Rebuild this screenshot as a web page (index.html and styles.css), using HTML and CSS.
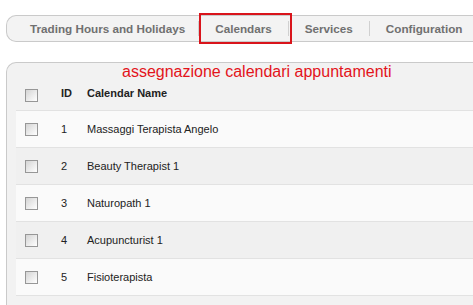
FILE: index.html
```html
<!DOCTYPE html>
<html>
<head>
<meta charset="utf-8">
<link rel="stylesheet" href="styles.css">
</head>
<body>
<div class="page">
  <nav class="tabs">
    <span class="tab tab-first">Trading Hours and Holidays</span>
    <span class="sep"></span>
    <span class="tab">Calendars</span>
    <span class="sep"></span>
    <span class="tab">Services</span>
    <span class="sep"></span>
    <span class="tab">Configuration</span>
    <span class="highlight"></span>
  </nav>
  <section class="panel">
    <div class="note">assegnazione calendari appuntamenti</div>
    <div class="table">
      <div class="row head">
        <span class="c-check"><span class="cb"></span></span>
        <span class="c-id">ID</span>
        <span class="c-name">Calendar Name</span>
      </div>
      <div class="row light">
        <span class="c-check"><span class="cb"></span></span>
        <span class="c-id">1</span>
        <span class="c-name">Massaggi Terapista Angelo</span>
      </div>
      <div class="row dark">
        <span class="c-check"><span class="cb"></span></span>
        <span class="c-id">2</span>
        <span class="c-name">Beauty Therapist 1</span>
      </div>
      <div class="row light">
        <span class="c-check"><span class="cb"></span></span>
        <span class="c-id">3</span>
        <span class="c-name">Naturopath 1</span>
      </div>
      <div class="row dark">
        <span class="c-check"><span class="cb"></span></span>
        <span class="c-id">4</span>
        <span class="c-name">Acupuncturist 1</span>
      </div>
      <div class="row light">
        <span class="c-check"><span class="cb"></span></span>
        <span class="c-id">5</span>
        <span class="c-name">Fisioterapista</span>
      </div>
    </div>
  </section>
</div>
</body>
</html>
```

FILE: styles.css
```css
html, body {
  margin: 0;
  padding: 0;
  background: #ffffff;
  overflow: hidden;
}
body {
  font-family: "Liberation Sans", Arial, sans-serif;
  width: 473px;
  height: 305px;
}
.page {
  width: 467px;
  height: 290px;
  padding: 15px 0 0 6px;
  overflow: hidden;
}
.tabs {
  position: relative;
  display: flex;
  align-items: center;
  height: 25px;
  border: 1px solid #cacaca;
  border-right: none;
  border-radius: 10px 0 0 10px;
  background: #f3f3f3;
}
.tab {
  font-size: 11.7px;
  font-weight: bold;
  color: #707070;
  padding: 0 16px;
  white-space: nowrap;
}
.tab-first {
  padding-left: 23px;
  padding-right: 13px;
}
.sep {
  width: 1px;
  height: 15px;
  background: #d0d0d0;
  flex-shrink: 0;
}
.highlight {
  position: absolute;
  left: 192px;
  top: -3px;
  width: 89px;
  height: 27px;
  border: 2px solid #d9141b;
}
.panel {
  position: relative;
  margin-top: 20px;
  border: 1px solid #cacaca;
  border-right: none;
  border-bottom: none;
  border-radius: 10px 0 0 0;
  background: #f2f2f2;
  padding: 11px 0 20px 9px;
}
.note {
  position: absolute;
  left: 115px;
  top: 0;
  font-size: 16px;
  color: #e3141b;
  white-space: nowrap;
}
.table {
  display: flex;
  flex-direction: column;
}
.row {
  display: flex;
  align-items: center;
  height: 36px;
  border-bottom: 1px solid #e2e2e2;
  font-size: 11px;
  color: #222;
}
.row.head {
  font-weight: bold;
  background: #f2f2f2;
}
.row.head .cb {
  margin-top: 7px;
}
.row.head .c-id,
.row.head .c-name {
  margin-top: 1px;
}
.row.light { background: #fafafa; }
.row.dark { background: #f0f0f0; }
.c-check {
  width: 45px;
  padding-left: 9px;
  box-sizing: border-box;
  display: flex;
  align-items: center;
}
.c-id {
  width: 26px;
}
.c-name {
  flex: 1;
}
.cb {
  display: block;
  width: 11px;
  height: 11px;
  border: 1px solid #979797;
  background: linear-gradient(135deg, #d4d4d4 0%, #eeeeee 60%, #ffffff 100%);
}
```
